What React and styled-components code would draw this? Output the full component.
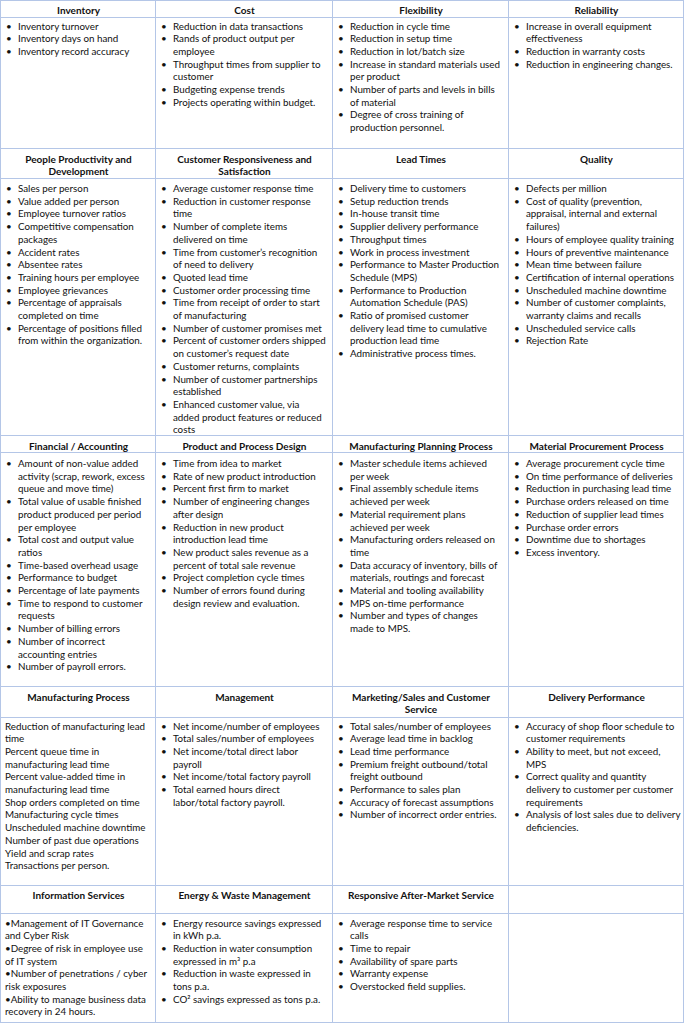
import React from "react";
import styled, { createGlobalStyle } from "styled-components";

const GlobalStyle = createGlobalStyle`
  html, body { margin: 0; padding: 0; background: #ffffff; }
  body { font-family: Lato, "Open Sans", sans-serif; color: #111; }
`;

const LINE = "#b4c6e7";

const Table = styled.div`
  width: 684px;
  box-sizing: border-box;
  border-top: 1px solid ${LINE};
  border-left: 1px solid ${LINE};
  font-size: 9.8px;
  line-height: 12.7px;
`;

const Band = styled.div`
  display: grid;
  grid-template-columns: 155px 177px 176px 175px;
  height: ${(p) => p.$h}px;
  box-sizing: border-box;
  border-bottom: 1px solid ${LINE};
`;

const Cell = styled.div`
  box-sizing: border-box;
  border-right: 1px solid ${LINE};
  padding: ${(p) => p.$pad}px 3px 0 4px;
  min-width: 0;
`;

const Heading = styled.div`
  font-weight: 700;
  font-size: 10px;
  text-align: center;
  white-space: pre-line;
  color: #111;
`;

const List = styled.ul`
  list-style: none;
  margin: 0;
  padding: 0;
`;

const Item = styled.li`
  display: flex;
  white-space: pre-line;
`;

const Bullet = styled.span`
  flex: none;
  width: 13px;
  padding-left: 1px;
  box-sizing: border-box;
`;

const Text = styled.span`
  flex: 1;
  white-space: pre;
`;

const sections = [
  {
    headH: 17, headPad: 2.5, bodyH: 131, bodyPad: 1.5,
    cells: [
      { title: "Inventory", items: ["Inventory turnover", "Inventory days on hand", "Inventory record accuracy"] },
      { title: "Cost", items: ["Reduction in data transactions", "Rands of product output per\nemployee", "Throughput times from supplier to\ncustomer", "Budgeting expense trends", "Projects operating within budget."] },
      { title: "Flexibility", items: ["Reduction in cycle time", "Reduction in setup time", "Reduction in lot/batch size", "Increase in standard materials used\nper product", "Number of parts and levels in bills\nof material", "Degree of cross training of\nproduction personnel."] },
      { title: "Reliability", items: ["Increase in overall equipment\neffectiveness", "Reduction in warranty costs", "Reduction in engineering changes."] },
    ],
  },
  {
    headH: 30, headPad: 3.5, bodyH: 257, bodyPad: 3,
    cells: [
      { title: "People Productivity and\nDevelopment", items: ["Sales per person", "Value added per person", "Employee turnover ratios", "Competitive compensation\npackages", "Accident rates", "Absentee rates", "Training hours per employee", "Employee grievances", "Percentage of appraisals\ncompleted on time", "Percentage of positions filled\nfrom within the organization."] },
      { title: "Customer Responsiveness and\nSatisfaction", items: ["Average customer response time", "Reduction in customer response\ntime", "Number of complete items\ndelivered on time", "Time from customer\u2019s recognition\nof need to delivery", "Quoted lead time", "Customer order processing time", "Time from receipt of order to start\nof manufacturing", "Number of customer promises met", "Percent of customer orders shipped\non customer\u2019s request date", "Customer returns, complaints", "Number of customer partnerships\nestablished", "Enhanced customer value, via\nadded product features or reduced\ncosts"] },
      { title: "Lead Times", items: ["Delivery time to customers", "Setup reduction trends", "In-house transit time", "Supplier delivery performance", "Throughput times", "Work in process investment", "Performance to Master Production\nSchedule (MPS)", "Performance to Production\nAutomation Schedule (PAS)", "Ratio of promised customer\ndelivery lead time to cumulative\nproduction lead time", "Administrative process times."] },
      { title: "Quality", items: ["Defects per million", "Cost of quality (prevention,\nappraisal, internal and external\nfailures)", "Hours of employee quality training", "Hours of preventive maintenance", "Mean time between failure", "Certification of internal operations", "Unscheduled machine downtime", "Number of customer complaints,\nwarranty claims and recalls", "Unscheduled service calls", "Rejection Rate"] },
    ],
  },
  {
    headH: 17, headPad: 3.5, bodyH: 234, bodyPad: 4,
    cells: [
      { title: "Financial / Accounting", items: ["Amount of non-value added\nactivity (scrap, rework, excess\nqueue and move time)", "Total value of usable finished\nproduct produced per period\nper employee", "Total cost and output value\nratios", "Time-based overhead usage", "Performance to budget", "Percentage of late payments", "Time to respond to customer\nrequests", "Number of billing errors", "Number of incorrect\naccounting entries", "Number of payroll errors."] },
      { title: "Product and Process Design", items: ["Time from idea to market", "Rate of new product introduction", "Percent first firm to market", "Number of engineering changes\nafter design", "Reduction in new product\nintroduction lead time", "New product sales revenue as a\npercent of total sale revenue", "Project completion cycle times", "Number of errors found during\ndesign review and evaluation."] },
      { title: "Manufacturing Planning Process", items: ["Master schedule items achieved\nper week", "Final assembly schedule items\nachieved per week", "Material requirement plans\nachieved per week", "Manufacturing orders released on\ntime", "Data accuracy of inventory, bills of\nmaterials, routings and forecast", "Material and tooling availability", "MPS on-time performance", "Number and types of changes\nmade to MPS."] },
      { title: "Material Procurement Process", items: ["Average procurement cycle time", "On time performance of deliveries", "Reduction in purchasing lead time", "Purchase orders released on time", "Reduction of supplier lead times", "Purchase order errors", "Downtime due to shortages", "Excess inventory."] },
    ],
  },
  {
    headH: 31, headPad: 3.5, bodyH: 168, bodyPad: 1.5,
    cells: [
      { title: "Manufacturing Process", plain: true, items: ["Reduction of manufacturing lead\ntime", "Percent queue time in\nmanufacturing lead time", "Percent value-added time in\nmanufacturing lead time", "Shop orders completed on time", "Manufacturing cycle times", "Unscheduled machine downtime", "Number of past due operations", "Yield and scrap rates", "Transactions per person."] },
      { title: "Management", items: ["Net income/number of employees", "Total sales/number of employees", "Net income/total direct labor\npayroll", "Net income/total factory payroll", "Total earned hours direct\nlabor/total factory payroll."] },
      { title: "Marketing/Sales and Customer\nService", items: ["Total sales/number of employees", "Average lead time in backlog", "Lead time performance", "Premium freight outbound/total\nfreight outbound", "Performance to sales plan", "Accuracy of forecast assumptions", "Number of incorrect order entries."] },
      { title: "Delivery Performance", items: ["Accuracy of shop floor schedule to\ncustomer requirements", "Ability to meet, but not exceed,\nMPS", "Correct quality and quantity\ndelivery to customer per customer\nrequirements", "Analysis of lost sales due to delivery\ndeficiencies."] },
    ],
  },
  {
    headH: 28, headPad: 3, bodyH: 109, bodyPad: 2.5,
    cells: [
      { title: "Information Services", plain: true, items: ["\u2022Management of IT Governance\nand Cyber Risk", "\u2022Degree of risk in employee use\nof IT system", "\u2022Number of penetrations / cyber\nrisk exposures", "\u2022Ability to manage business data\nrecovery in 24 hours."] },
      { title: "Energy & Waste Management", items: ["Energy resource savings expressed\nin kWh p.a.", "Reduction in water consumption\nexpressed in m\u00b3 p.a", "Reduction in waste expressed in\ntons p.a.", "CO\u00b2 savings expressed as tons p.a."] },
      { title: "Responsive After-Market Service", items: ["Average response time to service\ncalls", "Time to repair", "Availability of spare parts", "Warranty expense", "Overstocked field supplies."] },
      { title: "", items: [] },
    ],
  },
];

function Metrics({ items, plain }) {
  return (
    <List>
      {items.map((t, i) => (
        <Item key={i}>
          {!plain && <Bullet>{"\u2022"}</Bullet>}
          <Text>{t}</Text>
        </Item>
      ))}
    </List>
  );
}

export default function App() {
  return (
    <>
      <GlobalStyle />
      <Table>
        {sections.map((s, si) => (
          <React.Fragment key={si}>
            <Band $h={s.headH}>
              {s.cells.map((c, ci) => (
                <Cell key={ci} $pad={s.headPad}>
                  <Heading>{c.title}</Heading>
                </Cell>
              ))}
            </Band>
            <Band $h={s.bodyH}>
              {s.cells.map((c, ci) => (
                <Cell key={ci} $pad={s.bodyPad}>
                  <Metrics items={c.items} plain={c.plain} />
                </Cell>
              ))}
            </Band>
          </React.Fragment>
        ))}
      </Table>
    </>
  );
}
